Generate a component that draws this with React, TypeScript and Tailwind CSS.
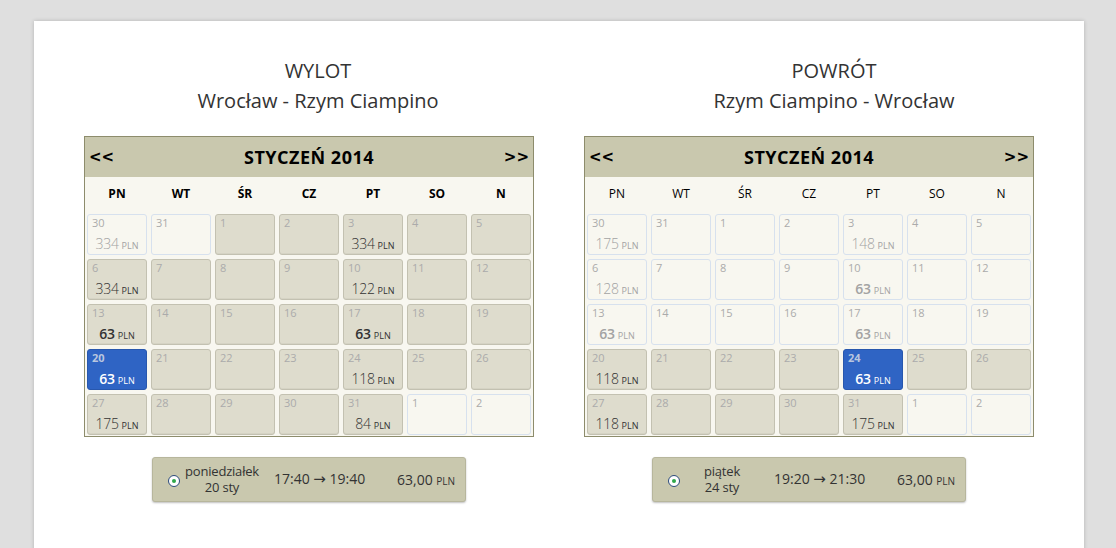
import React from 'react'

type Cell = { d: number; p?: number; kind: 'in' | 'out' | 'sel'; best?: boolean }

const font = { fontFamily: '"Open Sans", "Liberation Sans", sans-serif' }

// helpers for building the month grid
const o = (d: number, p?: number, best?: boolean): Cell => ({ d, p, kind: 'out', best })
const i = (d: number, p?: number, best?: boolean): Cell => ({ d, p, kind: 'in', best })
const s = (d: number, p?: number): Cell => ({ d, p, kind: 'sel', best: true })

const outbound: Cell[] = [
  o(30, 334), o(31), i(1), i(2), i(3, 334), i(4), i(5),
  i(6, 334), i(7), i(8), i(9), i(10, 122), i(11), i(12),
  i(13, 63, true), i(14), i(15), i(16), i(17, 63, true), i(18), i(19),
  s(20, 63), i(21), i(22), i(23), i(24, 118), i(25), i(26),
  i(27, 175), i(28), i(29), i(30), i(31, 84), o(1), o(2),
]

const inbound: Cell[] = [
  o(30, 175), o(31), o(1), o(2), o(3, 148), o(4), o(5),
  o(6, 128), o(7), o(8), o(9), o(10, 63, true), o(11), o(12),
  o(13, 63, true), o(14), o(15), o(16), o(17, 63, true), o(18), o(19),
  i(20, 118), i(21), i(22), i(23), s(24, 63), i(25), i(26),
  i(27, 118), i(28), i(29), i(30), i(31, 175), o(1), o(2),
]

const days = ['PN', 'WT', 'ŚR', 'CZ', 'PT', 'SO', 'N']

function DayCell({ c }: { c: Cell }) {
  const box =
    c.kind === 'sel'
      ? 'bg-[#2f64c4] border-[#2857ad]'
      : c.kind === 'in'
        ? 'bg-[#dedccd] border-[#c3c1b1] shadow-[inset_0_-1px_0_rgba(0,0,0,0.04)]'
        : 'bg-[#f8f7f0] border-[#d7e1ee]'
  const num = c.kind === 'sel' ? 'text-[#b9c6df] font-bold' : 'text-[#ababab]'
  const price =
    c.kind === 'sel' ? 'text-white' : c.kind === 'in' ? 'text-[#333]' : 'text-[#a3a3a3]'
  return (
    <div className={`h-[41px] rounded-[3px] border ${box} relative`}>
      <div className={`absolute left-[4px] top-[1px] text-[11px] leading-[14px] ${num}`}>{c.d}</div>
      {c.p !== undefined && (
        <div className={`absolute inset-x-0 top-[19px] text-center leading-[18px] ${price} ${c.best ? 'font-semibold' : 'font-light'}`}>
          <span className="text-[14px] tracking-[-0.3px]">{c.p}</span>
          <span className="text-[9px] ml-[3px] font-normal">PLN</span>
        </div>
      )}
    </div>
  )
}

function Calendar({ cells, boldDays }: { cells: Cell[]; boldDays: boolean }) {
  const arrows = { fontFamily: '"DejaVu Sans", sans-serif' }
  return (
    <div className="w-[450px] border border-[#8d8c6c] bg-[#f8f7f0]">
      <div className="h-[40px] bg-[#c9c8ae] flex items-center justify-between px-[4px] text-black">
        <span className="text-[15px] font-bold" style={arrows}>&lt;&lt;</span>
        <span className="text-[18px] font-bold tracking-[0.5px]">STYCZEŃ 2014</span>
        <span className="text-[15px] font-bold" style={arrows}>&gt;&gt;</span>
      </div>
      <div className="grid grid-cols-7 h-[34px] items-center px-[2px] gap-x-1">
        {days.map(d => (
          <div key={d} className={`text-center text-[12px] text-black ${boldDays ? 'font-bold' : ''}`}>{d}</div>
        ))}
      </div>
      <div className="grid grid-cols-7 gap-1 px-[2px] pt-[3px] pb-[1px]">
        {cells.map((c, k) => <DayCell key={k} c={c} />)}
      </div>
    </div>
  )
}

function Radio() {
  return (
    <span className="w-[12px] h-[12px] rounded-full border border-[#2b4a7a] bg-white flex items-center justify-center shrink-0 mt-[2px]">
      <span className="w-[4px] h-[4px] rounded-full bg-[#2fa84a]" />
    </span>
  )
}

function FlightBox({ day, date, time }: { day: string; date: string; time: [string, string] }) {
  return (
    <div className="mx-auto mt-5 w-[314px] h-[45px] rounded-[3px] bg-[#c9c8ae] border border-[#b7b69c] shadow-[0_1px_2px_rgba(0,0,0,0.25)] flex items-center pl-[15px] text-[#333] text-[14px]">
      <Radio />
      <div className="ml-[4px] w-[76px] text-center text-[13px] leading-[16px] -mt-[2px] tracking-[-0.2px]">
        <div>{day}</div>
        <div>{date}</div>
      </div>
      <div className="ml-[14px] w-[96px] whitespace-nowrap">
        {time[0]} <span style={{ fontFamily: '"DejaVu Sans", sans-serif' }} className="text-[15px]">→</span> {time[1]}
      </div>
      <div className="ml-[27px] whitespace-nowrap">
        63,00 <span className="text-[10px]">PLN</span>
      </div>
    </div>
  )
}

function Column({
  label, route, cells, boldDays, shift, box,
}: {
  label: string; route: string; cells: Cell[]; boldDays: boolean; shift: string
  box: { day: string; date: string; time: [string, string] }
}) {
  return (
    <div className="w-[450px]">
      <div className={`text-center text-[20px] leading-[30px] text-[#333] mb-5 ${shift}`}>
        <div>{label}</div>
        <div>{route}</div>
      </div>
      <Calendar cells={cells} boldDays={boldDays} />
      <FlightBox {...box} />
    </div>
  )
}

export default function App() {
  return (
    <div className="h-[548px] overflow-hidden bg-[#dfdfdf] pt-[21px]" style={font}>
      <div className="ml-[34px] w-[1050px] h-[600px] bg-white shadow-[0_0_4px_rgba(0,0,0,0.2)] pt-[35px] pl-[50px] flex gap-[50px]">
        <Column
          label="WYLOT"
          route="Wrocław - Rzym Ciampino"
          cells={outbound}
          boldDays
          shift="pl-[18px]"
          box={{ day: 'poniedziałek', date: '20 sty', time: ['17:40', '19:40'] }}
        />
        <Column
          label="POWRÓT"
          route="Rzym Ciampino - Wrocław"
          cells={inbound}
          boldDays={false}
          shift="pl-[50px]"
          box={{ day: 'piątek', date: '24 sty', time: ['19:20', '21:30'] }}
        />
      </div>
    </div>
  )
}
